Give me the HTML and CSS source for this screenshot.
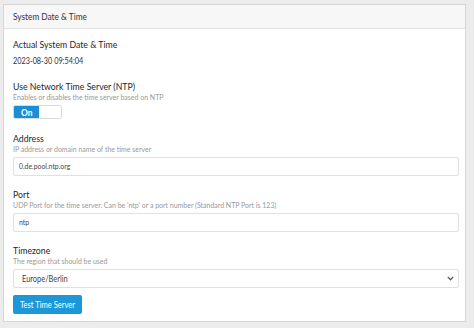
FILE: index.html
```html
<!DOCTYPE html>
<html>
<head>
<meta charset="utf-8">
<link rel="stylesheet" href="styles.css">
</head>
<body>
<div class="panel">
  <div class="panel-head"><span class="sq">System Date &amp; Time</span></div>
  <div class="panel-body">
    <div class="label sq">Actual System Date &amp; Time</div>
    <div class="value sq">2023-08-30 09:54:04</div>

    <div class="label sq sec-first">Use Network Time Server (NTP)</div>
    <div class="help sq">Enables or disables the time server based on NTP</div>
    <div class="toggle"><span class="on"><span class="sq">On</span></span><span class="off"></span></div>

    <div class="label sq sec-toggle">Address</div>
    <div class="help sq">IP address or domain name of the time server</div>
    <div class="input"><span class="sq">0.de.pool.ntp.org</span></div>

    <div class="label sq sec">Port</div>
    <div class="help sq">UDP Port for the time server. Can be 'ntp' or a port number (Standard NTP Port is 123)</div>
    <div class="input"><span class="sq">ntp</span></div>

    <div class="label sq sec">Timezone</div>
    <div class="help sq">The region that should be used</div>
    <div class="input select"><span class="sq">Europe/Berlin</span>
      <svg class="chev" width="7" height="5" viewBox="0 0 7 5"><path d="M0.8 0.9 L3.5 3.7 L6.2 0.9" fill="none" stroke="#555" stroke-width="1.3"/></svg>
    </div>

    <div class="btn"><span class="sq">Test Time Server</span></div>
  </div>
</div>
</body>
</html>
```

FILE: styles.css
```css
html, body {
  margin: 0;
  padding: 0;
}
body {
  background: #ececec;
  font-family: Lato, "Open Sans", sans-serif;
  color: #333;
  width: 474px;
  height: 328px;
  overflow: hidden;
  padding: 4px 0 0 3px;
  box-sizing: border-box;
}
.sq {
  display: inline-block;
  transform: scaleX(0.84);
  transform-origin: 0 50%;
  white-space: nowrap;
}
.label.sq, .value.sq, .help.sq {
  display: block;
}
.panel {
  background: #fff;
  border: 1px solid #d6d6d6;
  width: 463px;
  height: 318px;
  box-sizing: border-box;
}
.panel-head {
  background: #f7f7f7;
  border-bottom: 1px solid #e0e0e0;
  height: 24px;
  box-sizing: border-box;
  font-size: 9.9px;
  line-height: 12px;
  padding: 5px 9px 0;
  color: #333;
}
.panel-body {
  padding: 9px 6px 0 9px;
  display: flex;
  flex-direction: column;
  align-items: stretch;
}
.label {
  font-size: 10.4px;
  line-height: 12px;
  color: #262626;
}
.value {
  font-size: 8.7px;
  line-height: 14px;
  margin-top: 4px;
  color: #333;
}
.sec-first { margin-top: 12px; }
.sec-toggle { margin-top: 13px; }
.sec { margin-top: 12px; }
.help {
  font-size: 8.3px;
  line-height: 10px;
  color: #999;
}
.toggle {
  display: flex;
  height: 14px;
  width: 49px;
  box-sizing: border-box;
  border: 1px solid #dadada;
  border-radius: 2px;
  margin-top: 3px;
  overflow: hidden;
}
.toggle .on {
  background: #1a8fd5;
  color: #fff;
  font-size: 10px;
  font-weight: bold;
  width: 25px;
  box-sizing: border-box;
  padding-left: 7px;
  line-height: 12px;
}
.toggle .off {
  flex: 1;
  background: #fff;
}
.input {
  width: 446px;
  height: 19px;
  box-sizing: border-box;
  border: 1px solid #e0e0e0;
  border-radius: 2px;
  margin-top: 3px;
  font-size: 8.2px;
  line-height: 17px;
  padding-left: 5px;
  color: #444;
  display: flex;
  align-items: center;
  justify-content: space-between;
}
.select {
  font-size: 8.9px;
  padding-left: 8px;
  padding-right: 4px;
}
.btn {
  align-self: flex-start;
  margin-top: 7px;
  background: #1c98d8;
  color: #fff;
  font-size: 9px;
  width: 69px;
  height: 19px;
  box-sizing: border-box;
  line-height: 19px;
  padding-left: 7px;
  border-radius: 2px;
  overflow: hidden;
}
```
